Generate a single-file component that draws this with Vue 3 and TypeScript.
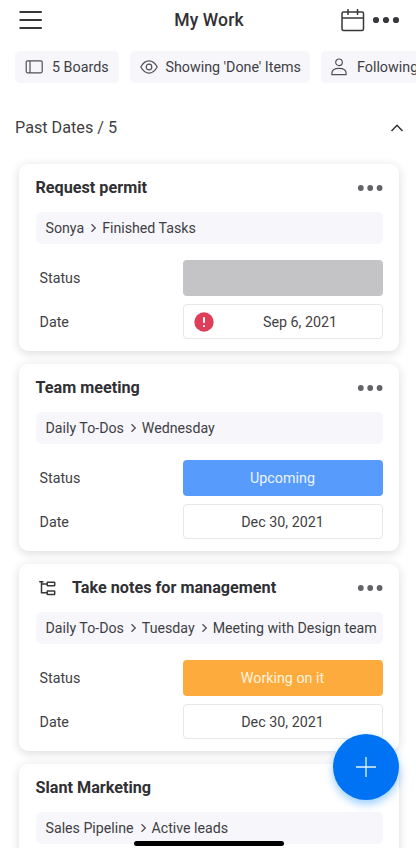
<script setup lang="ts">
interface WorkItem {
  title: string
  path: string[]
  status: string
  tone: 'empty' | 'upcoming' | 'working'
  date: string
  overdue?: boolean
  subitem?: boolean
}

const items: WorkItem[] = [
  { title: 'Request permit', path: ['Sonya', 'Finished Tasks'], status: '', tone: 'empty', date: 'Sep 6, 2021', overdue: true },
  { title: 'Team meeting', path: ['Daily To-Dos', 'Wednesday'], status: 'Upcoming', tone: 'upcoming', date: 'Dec 30, 2021' },
  { title: 'Take notes for management', path: ['Daily To-Dos', 'Tuesday', 'Meeting with Design team'], status: 'Working on it', tone: 'working', date: 'Dec 30, 2021', subitem: true },
]
const nextItem = { title: 'Slant Marketing', path: ['Sales Pipeline', 'Active leads'] }
</script>

<template>
  <div class="screen">
    <header class="topbar">
      <svg class="menu" width="24" height="20" viewBox="0 0 24 20"><path d="M2.200 2h21M2.200 10h21M2.200 18h21" /></svg>
      <h1>My Work</h1>
      <div class="actions">
        <svg class="calendar" width="24" height="24" viewBox="0 0 24 24"><rect x="1" y="4" width="21.5" height="18.5" rx="1.5" /><path d="M1 10h21.5M7 1v6M16.5 1v6" /></svg>
        <svg class="more" width="28" height="8" viewBox="0 0 28 8"><circle cx="4" cy="4" r="3.1" /><circle cx="14" cy="4" r="3.1" /><circle cx="24" cy="4" r="3.1" /></svg>
      </div>
    </header>

    <nav class="filters">
      <div class="chip boards">
        <svg width="18" height="14" viewBox="0 0 18 14"><rect x="1.200" y=".8" width="16" height="12" rx="1.5" /><path d="M5 1v12" /></svg>
        <span>5 Boards</span>
      </div>
      <div class="chip done">
        <svg width="18" height="14" viewBox="0 0 18 14"><path d="M.8 7C3 3 5.700.900 9 .9S15 3 17.200 7C15 11 12.300 13.100 9 13.100S3 11 .8 7Z" /><circle cx="9" cy="7" r="2.800" /></svg>
        <span>Showing 'Done' Items</span>
      </div>
      <div class="chip following">
        <svg width="16" height="18" viewBox="0 0 16 18"><circle cx="8" cy="4.300" r="3.300" /><path d="M.9 16.700v-1.500C.9 12 3.800 10.300 8 10.300s7.100 1.700 7.100 4.900v1.500Z" /></svg>
        <span>Following</span>
      </div>
    </nav>

    <div class="section">
      <h2>Past Dates / 5</h2>
      <svg width="14" height="10" viewBox="0 0 14 10"><path d="M1.500 8 7 2.300 12.500 8" /></svg>
    </div>

    <main class="cards">
      <article v-for="item in items" :key="item.title" class="card">
        <div class="card-head">
          <svg v-if="item.subitem" class="tree" width="18" height="16" viewBox="0 0 18 16"><path d="M.2 1.700h4.300M2.500 1.700v11.100h5.700M2.500 4h5.700" /><rect x="8.200" y="2.200" width="7.500" height="3.600" rx=".5" /><rect x="8.200" y="11" width="7.500" height="3.600" rx=".5" /></svg>
          <h3>{{ item.title }}</h3>
          <svg class="dots" width="26" height="8" viewBox="0 0 26 8"><circle cx="3.800" cy="4" r="2.900" /><circle cx="13.200" cy="4" r="2.900" /><circle cx="22.600" cy="4" r="2.900" /></svg>
        </div>
        <div class="path">
          <template v-for="(part, i) in item.path" :key="part">
            <svg v-if="i > 0" width="18" height="10" viewBox="0 0 18 10"><path d="m7.500 1.200 3.800 3.800-3.800 3.800" /></svg>
            <span>{{ part }}</span>
          </template>
        </div>
        <div class="row">
          <span class="label">Status</span>
          <div class="status" :class="item.tone">{{ item.status }}</div>
        </div>
        <div class="row">
          <span class="label">Date</span>
          <div class="date" :class="{ overdue: item.overdue }">
            <svg v-if="item.overdue" width="20" height="20" viewBox="0 0 20 20"><circle cx="10" cy="10" r="9.700" /><path d="M10 5.200v5.600M10 13.300v1.800" /></svg>
            <span>{{ item.date }}</span>
          </div>
        </div>
      </article>
      <article class="card">
        <div class="card-head">
          <h3>{{ nextItem.title }}</h3>
        </div>
        <div class="path">
          <span>{{ nextItem.path[0] }}</span>
          <svg width="18" height="10" viewBox="0 0 18 10"><path d="m7.500 1.200 3.800 3.800-3.800 3.800" /></svg>
          <span>{{ nextItem.path[1] }}</span>
        </div>
      </article>
    </main>

    <button class="add" aria-label="Add item">
      <svg width="22" height="22" viewBox="0 0 22 22"><path d="M11 1v20M1 11h20" /></svg>
    </button>
    <div class="home-bar"></div>
  </div>
</template>

<style>
body { background: #fff; overflow: hidden; }
</style>

<style scoped>
* { box-sizing: border-box; }
.screen {
  position: relative;
  width: 416px;
  height: 848px;
  overflow: hidden;
  background: #fff;
  color: #3f3f43;
  font: 14.3px/20px Roboto, sans-serif;
}
svg { display: block; flex: none; fill: none; stroke: #38383c; }
h1, h2, h3 { margin: 0; }
.topbar {
  display: grid;
  grid-template-columns: 1fr auto 1fr;
  align-items: center;
  height: 40px;
  padding: 0 16px 0 18px;
}
.menu { stroke-width: 1.8; stroke-linecap: round; }
h1 { font-size: 17.500px; font-weight: 500; letter-spacing: .1px; color: #303034; }
.actions { display: flex; justify-content: flex-end; align-items: center; gap: 7px; }
.calendar { stroke-width: 1.500; }
.more { fill: #38383c; stroke: none; }
.filters { display: flex; gap: 11px; margin-top: 11px; padding-left: 15px; }
.chip {
  display: flex;
  flex: none;
  align-items: center;
  height: 32px;
  padding-left: 10px;
  border-radius: 5px;
  background: #f6f6fb;
  white-space: nowrap;
}
.chip svg { stroke: #505055; stroke-width: 1.200; }
.boards { width: 103.500px; gap: 9px; }
.done { width: 180.500px; gap: 8px; letter-spacing: -.020px; }
.following { width: 120px; gap: 10px; }
.section {
  display: flex;
  align-items: center;
  justify-content: space-between;
  height: 24px;
  margin-top: 33px;
  padding: 0 12px 0 15px;
}
h2 { font-size: 16.200px; font-weight: 400; }
.section svg { stroke-width: 1.600; }
.cards { display: flex; flex-direction: column; gap: 13px; margin-top: 24px; padding: 0 17px 0 19px; }
.card {
  flex: none;
  height: 187px;
  padding: 12px 16.500px 0;
  border-radius: 9px;
  background: #fff;
  box-shadow: 0 2px 10px rgba(40, 35, 50, .17);
}
.card-head { display: flex; align-items: center; height: 24px; margin-bottom: 12px; }
h3 { font-size: 16.200px; font-weight: 700; color: #303034; }
.tree { margin: 0 15px 0 3.500px; stroke-width: 1.500; }
.dots { margin-left: auto; fill: #646468; stroke: none; }
.path {
  display: flex;
  align-items: center;
  height: 32px;
  margin-bottom: 16.500px;
  padding-left: 10px;
  border-radius: 5px;
  background: #f6f6fb;
  font-size: 14.200px;
  letter-spacing: -.005px;
  white-space: nowrap;
}
.path svg { stroke-width: 1.300; stroke: #505055; }
.row { display: flex; align-items: center; justify-content: space-between; height: 35px; padding-left: 4px; margin-bottom: 8.500px; }
.status, .date { display: flex; align-items: center; justify-content: center; width: 200px; height: 35px; border-radius: 4px; }
.status { height: 36px; color: #edf5ff; }
.empty { background: #c4c4c6; }
.upcoming { background: #579bfc; }
.working { background: #fdab3d; color: #fff4df; }
.date { border: 1px solid #e7e7eb; }
.overdue { justify-content: flex-start; padding-left: 10px; }
.overdue svg { fill: #df3e5b; stroke: #fff; stroke-width: 2; }
.overdue circle { stroke: none; }
.overdue span { flex: 1; padding-right: 9px; padding-left: 14px; text-align: center; }
.add {
  position: absolute;
  right: 17px;
  bottom: 48px;
  display: grid;
  place-items: center;
  width: 66px;
  height: 66px;
  padding: 0;
  border: 0;
  border-radius: 50%;
  background: #0073f5;
  box-shadow: 0 4px 8px rgba(0, 133, 255, .4);
}
.add svg { stroke: #e4f5ff; stroke-width: 1.300; }
.home-bar {
  position: absolute;
  bottom: 2px;
  left: 134px;
  width: 150px;
  height: 5px;
  border-radius: 3px;
  background: #000;
}
</style>
